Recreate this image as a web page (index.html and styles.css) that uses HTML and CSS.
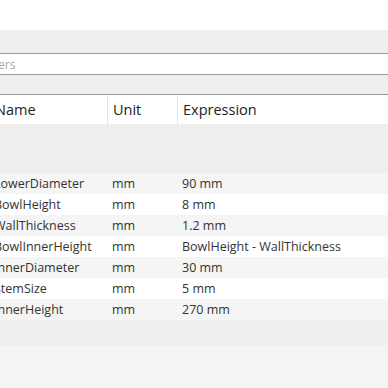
FILE: index.html
```html
<!DOCTYPE html>
<html>
<head>
<meta charset="utf-8">
<link rel="stylesheet" href="styles.css">
</head>
<body>
<div class="top"></div>
<div class="panel">
  <div class="filter"><input class="filter-input" type="text" placeholder="Filter parameters"></div>
  <div class="table">
    <div class="head">
      <div class="c name">Name</div>
      <div class="c unit">Unit</div>
      <div class="c expr">Expression</div>
    </div>
    <div class="group"></div>
    <div class="row odd"><div class="c name">LowerDiameter</div><div class="c unit">mm</div><div class="c expr">90 mm</div></div>
    <div class="row"><div class="c name">BowlHeight</div><div class="c unit">mm</div><div class="c expr">8 mm</div></div>
    <div class="row odd"><div class="c name">WallThickness</div><div class="c unit">mm</div><div class="c expr">1.2 mm</div></div>
    <div class="row"><div class="c name">BowlInnerHeight</div><div class="c unit">mm</div><div class="c expr">BowlHeight - WallThickness</div></div>
    <div class="row odd"><div class="c name">InnerDiameter</div><div class="c unit">mm</div><div class="c expr">30 mm</div></div>
    <div class="row"><div class="c name">StemSize</div><div class="c unit">mm</div><div class="c expr">5 mm</div></div>
    <div class="row odd"><div class="c name">InnerHeight</div><div class="c unit">mm</div><div class="c expr">270 mm</div></div>
    <div class="foot"></div>
  </div>
</div>
</body>
</html>
```
FILE: styles.css
```css
html, body {
  margin: 0;
  padding: 0;
  background: #f4f4f4;
  font-family: "Open Sans", "Noto Sans", sans-serif;
  overflow: hidden;
}
.top {
  height: 30px;
  background: #ffffff;
}
.panel {
  background: #eeeeee;
}
.filter {
  padding-top: 23px;
  padding-bottom: 19px;
  margin-left: -81px;
}
.filter-input {
  display: block;
  box-sizing: border-box;
  width: 520px;
  height: 22px;
  margin: 0;
  border: 1px solid #9a9a9a;
  border-left: 0;
  border-right: 0;
  background: #fff;
  padding: 0;
  font-family: inherit;
  font-size: 12px;
  color: #333;
  outline: none;
}
.filter-input::placeholder {
  color: #a8a8a8;
}
.table {
  margin-left: -10px;
}
.head {
  display: flex;
  height: 29px;
  background: #fff;
  border-top: 1px solid #9a9a9a;
  font-size: 14.5px;
  color: #222;
}
.head .c {
  display: flex;
  align-items: center;
  box-sizing: border-box;
}
.head .name { width: 118px; padding-left: 5px; border-right: 1px solid #e4e4e4; }
.head .unit { width: 70px; padding-left: 5px; border-right: 1px solid #e4e4e4; }
.head .expr { flex: 1; padding-left: 5px; }
.group {
  height: 49px;
  background: #eeeeee;
}
.row {
  display: flex;
  height: 21px;
  align-items: center;
  background: #ffffff;
  font-size: 12.5px;
  color: #333;
}
.row.odd { background: #f5f5f5; }
.row .c { box-sizing: border-box; white-space: nowrap; }
.row .name { width: 118px; padding-left: 4px; }
.row .unit { width: 70px; padding-left: 4px; }
.row .expr { flex: 1; padding-left: 4px; }
.foot {
  height: 25px;
  background: #eeeeee;
}
```
